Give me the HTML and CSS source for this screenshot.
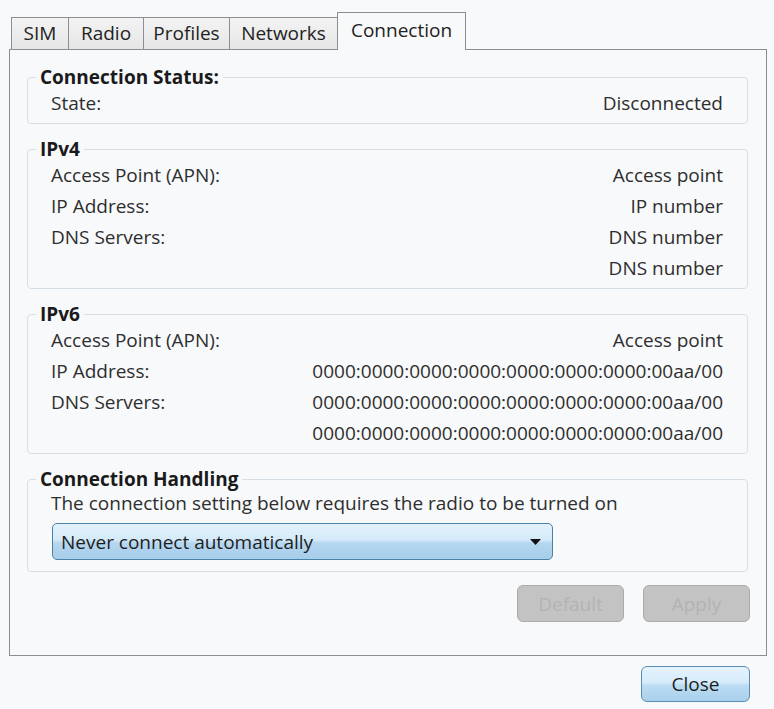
FILE: index.html
```html
<!DOCTYPE html>
<html>
<head>
<meta charset="utf-8">
<link rel="stylesheet" href="styles.css">
</head>
<body>
<div class="window">
  <div class="tabs">
    <div class="tab t-sim">SIM</div>
    <div class="tab t-radio">Radio</div>
    <div class="tab t-profiles">Profiles</div>
    <div class="tab t-networks">Networks</div>
    <div class="tab t-connection selected">Connection</div>
  </div>
  <div class="panel">
    <fieldset class="group">
      <legend>Connection Status:</legend>
      <div class="body">
        <div class="row"><span>State:</span><span>Disconnected</span></div>
      </div>
    </fieldset>
    <fieldset class="group">
      <legend>IPv4</legend>
      <div class="body">
        <div class="row"><span>Access Point (APN):</span><span>Access point</span></div>
        <div class="row"><span>IP Address:</span><span>IP number</span></div>
        <div class="row"><span>DNS Servers:</span><span>DNS number</span></div>
        <div class="row"><span></span><span>DNS number</span></div>
      </div>
    </fieldset>
    <fieldset class="group">
      <legend>IPv6</legend>
      <div class="body">
        <div class="row"><span>Access Point (APN):</span><span>Access point</span></div>
        <div class="row"><span>IP Address:</span><span>0000:0000:0000:0000:0000:0000:0000:00aa/00</span></div>
        <div class="row"><span>DNS Servers:</span><span>0000:0000:0000:0000:0000:0000:0000:00aa/00</span></div>
        <div class="row"><span></span><span>0000:0000:0000:0000:0000:0000:0000:00aa/00</span></div>
      </div>
    </fieldset>
    <fieldset class="group last">
      <legend>Connection Handling</legend>
      <div class="body handling">
        <div class="note">The connection setting below requires the radio to be turned on</div>
        <div class="select">
          <span>Never connect automatically</span>
          <svg class="arrow" width="11" height="6" viewBox="0 0 11 6"><path d="M0 0 H11 L5.5 6 Z" fill="#111"/></svg>
        </div>
      </div>
    </fieldset>
    <div class="actions">
      <button class="btn disabled" disabled>Default</button>
      <button class="btn disabled" disabled>Apply</button>
    </div>
  </div>
  <div class="footer">
    <button class="btn primary">Close</button>
  </div>
</div>
</body>
</html>
```

FILE: styles.css
```css
html, body {
  margin: 0;
  padding: 0;
  background: #f8f9fa;
}
body {
  font-family: "Open Sans", "Noto Sans", sans-serif;
  font-size: 19px;
  color: #2e2e2e;
}
.window {
  padding: 12px 7px 0 9px;
}
.tabs {
  display: flex;
  align-items: flex-end;
  height: 37px;
  padding-left: 2px;
}
.tab {
  box-sizing: border-box;
  height: 32px;
  line-height: 30px;
  text-align: center;
  border: 1px solid #8c8e94;
  border-bottom: none;
  background: linear-gradient(#f3f3f3, #e6e6e6);
  margin-left: -1px;
  color: #222;
  white-space: nowrap;
}
.tab:first-child {
  margin-left: 0;
}
.t-sim { width: 58px; }
.t-radio { width: 76px; }
.t-profiles { width: 87px; }
.t-networks { width: 109px; }
.t-connection { width: 129px; }
.tab.selected {
  height: 38px;
  line-height: 35px;
  margin-bottom: -1px;
  background: #f8f9fa;
  position: relative;
  z-index: 1;
}
.panel {
  border: 1px solid #8c8e94;
  padding: 17px 18px 33px 17px;
}
.group {
  margin: 0 0 15px 0;
  padding: 0 9px 5px 8px;
  border: 1px solid #d5dfe5;
  border-radius: 4px;
  min-width: 0;
}
.group.last {
  margin-bottom: 0;
}
.group legend {
  padding: 0 4px;
  margin: 0;
  font-weight: 700;
  line-height: 20px;
  color: #1a1a1a;
}
.body {
  padding: 0 15px;
}
.row {
  display: flex;
  justify-content: space-between;
  align-items: center;
  height: 31px;
  white-space: nowrap;
}
.handling {
  padding-bottom: 6px;
}
.note {
  height: 28px;
  line-height: 28px;
  white-space: nowrap;
}
.select {
  box-sizing: border-box;
  margin: 6px 0 0 1px;
  width: 501px;
  height: 37px;
  border: 1px solid #4a7fa8;
  border-radius: 5px;
  background: linear-gradient(#e3f1fb 0%, #d4eaf9 45%, #b5d6ef 55%, #a6cdea 100%);
  display: flex;
  align-items: center;
  justify-content: space-between;
  padding: 0 11px 0 8px;
  color: #1e1e1e;
}
.actions {
  display: flex;
  justify-content: flex-end;
  gap: 19px;
  margin: 13px -2px 0 0;
}
.btn {
  font-family: inherit;
  font-size: 19px;
  height: 37px;
  border-radius: 6px;
  padding: 0;
}
.btn.disabled {
  width: 107px;
  background: #c3c3c3;
  border: 1px solid #ababab;
  color: #b3b3b3;
}
.footer {
  display: flex;
  justify-content: flex-end;
  padding: 10px 17px 0 0;
}
.btn.primary {
  width: 109px;
  height: 36px;
  border: 1px solid #5a8db4;
  background: linear-gradient(#e5f3fc 0%, #d6ecfb 45%, #bbdcf3 55%, #a9d0ec 100%);
  color: #1e1e1e;
}
```
